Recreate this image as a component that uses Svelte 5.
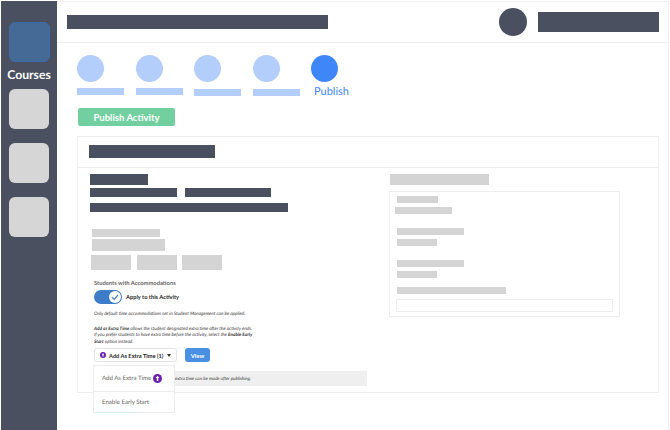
<script lang="ts">
	const steps = [
		{ low: false },
		{ low: false },
		{ low: true },
		{ low: true }
	];
</script>

<div class="page">
	<nav class="side">
		<div class="tile active"></div>
		<div class="courses">Courses</div>
		<div class="tile"></div>
		<div class="tile"></div>
		<div class="tile"></div>
	</nav>

	<div class="main">
		<header class="top">
			<div class="dark top-title"></div>
			<div class="avatar"></div>
			<div class="dark top-user"></div>
		</header>

		<section class="content">
			<div class="stepper">
				{#each steps as step}
					<div class="step">
						<div class="dot"></div>
						<div class="step-label" class:low={step.low}></div>
					</div>
				{/each}
				<div class="step">
					<div class="dot current"></div>
					<div class="publish">Publish</div>
				</div>
			</div>

			<button class="publish-btn">Publish Activity</button>

			<div class="card">
				<div class="card-head">
					<div class="dark card-title"></div>
				</div>
				<div class="card-body">
					<div class="left">
						<div class="dark l1"></div>
						<div class="row l2">
							<div class="dark l2a"></div>
							<div class="dark l2b"></div>
						</div>
						<div class="dark l3"></div>
						<div class="grey g1"></div>
						<div class="grey g2"></div>
						<div class="row g3">
							<div class="grey chip"></div>
							<div class="grey chip"></div>
							<div class="grey chip"></div>
						</div>

						<div class="acc">
							<div class="acc-title">Students with Accommodations</div>
							<div class="apply">
								<div class="toggle">
									<div class="knob">
										<svg viewBox="0 0 12 12" width="10" height="10">
											<path d="M2.5 6.3 5 8.8 9.6 3.6" fill="none" stroke="#3d7cc9" stroke-width="1.4" />
										</svg>
									</div>
								</div>
								<span>Apply to this Activity</span>
							</div>
							<p class="fine first">Only default time accommodations set in Student Management can be applied.</p>
							<p class="fine second">
								<b>Add as Extra Time</b> allows the student designated extra time after the activity ends.<br />
								If you prefer students to have extra time before the activity, select the <b>Enable Early<br />
								Start</b> option instead.
							</p>
							<div class="actions">
								<div class="dropdown">
									<button class="drop-btn">
										<svg class="up small" viewBox="0 0 12 12">
											<circle cx="6" cy="6" r="6" fill="#6a1fb0" />
											<path d="M6 2.4 8.6 5.4H7V9.4H5V5.4H3.4Z" fill="#fff" />
										</svg>
										<span class="drop-text">Add As Extra Time (1)</span>
										<span class="caret"></span>
									</button>
									<div class="menu">
										<div class="menu-item one">
											Add As Extra Time
											<svg class="up" viewBox="0 0 12 12">
												<circle cx="6" cy="6" r="6" fill="#6a1fb0" />
												<path d="M6 2.4 8.6 5.4H7V9.4H5V5.4H3.4Z" fill="#fff" />
											</svg>
										</div>
										<div class="menu-item two">Enable Early Start</div>
									</div>
								</div>
								<button class="view">View</button>
							</div>
							<div class="note">extra time can be made after publishing.</div>
						</div>
					</div>

					<div class="right">
						<div class="grey r-title"></div>
						<div class="panel">
							<div class="grey p1"></div>
							<div class="grey p2"></div>
							<div class="grey p3"></div>
							<div class="grey p4"></div>
							<div class="grey p3"></div>
							<div class="grey p4"></div>
							<div class="grey p5"></div>
							<div class="field"></div>
						</div>
					</div>
				</div>
			</div>
		</section>
	</div>
</div>

<style>
	:global(body) {
		background: #fff;
	}
	.page {
		width: 670px;
		height: 430px;
		box-sizing: border-box;
		padding: 1px 0 0 1px;
		display: flex;
		overflow: hidden;
		font-family: Lato, "Open Sans", sans-serif;
		text-rendering: geometricPrecision;
	}
	.side {
		width: 56px;
		flex: none;
		background: #4a5060;
		display: flex;
		flex-direction: column;
		align-items: center;
		padding-top: 21px;
		box-sizing: border-box;
	}
	.tile {
		width: 40px;
		height: 40px;
		border-radius: 6px;
		background: #d6d6d6;
		margin-bottom: 14px;
	}
	.tile.active {
		width: 41px;
		background: #466a96;
		border: 1px solid #3f6ca8;
		box-sizing: border-box;
		margin-bottom: 0;
	}
	.courses {
		color: #fff;
		font-size: 12.2px;
		font-weight: 700;
		line-height: 16px;
		margin: 5px 0 6px;
	}
	.main {
		flex: 1;
		border-top: 1px solid #f2f2f2;
		border-right: 1px solid #f0f0f0;
		margin-right: 1px;
	}
	.top {
		height: 40px;
		border-bottom: 1px solid #f0f0f0;
		display: flex;
		align-items: center;
	}
	.dark {
		background: #4a5060;
	}
	.grey {
		background: #d4d4d4;
	}
	.top-title {
		width: 261px;
		height: 14px;
		margin-left: 10px;
	}
	.avatar {
		width: 28px;
		height: 28px;
		border-radius: 50%;
		background: #4a5060;
		margin-left: 171px;
	}
	.top-user {
		width: 121px;
		height: 20px;
		margin-left: 11px;
	}
	.content {
		padding: 12px 0 0 20px;
	}
	.stepper {
		display: grid;
		grid-template-columns: repeat(5, 58.5px);
		height: 44px;
	}
	.dot {
		width: 27px;
		height: 27px;
		border-radius: 50%;
		background: #b3cefb;
	}
	.dot.current {
		background: #3f87f9;
	}
	.step-label {
		width: 47px;
		height: 7px;
		margin-top: 6px;
		background: #b3cefb;
	}
	.step-label.low {
		margin-top: 7px;
	}
	.publish {
		color: #3f87f9;
		font-size: 11px;
		line-height: 16px;
		margin: 2px 0 0 3px;
	}
	.publish-btn {
		display: block;
		width: 97px;
		height: 18px;
		margin: 9px 0 0 1px;
		padding: 0;
		border: none;
		border-radius: 2px;
		background: #72d0a0;
		color: #fff;
		font: 700 9.5px Lato, sans-serif;
	}
	.card {
		width: 582px;
		height: 257px;
		box-sizing: border-box;
		margin-top: 10px;
		border: 1px solid #eeeeee;
	}
	.card-head {
		height: 22px;
		border-bottom: 1px solid #eeeeee;
		padding: 8px 0 0 11px;
	}
	.card-title {
		width: 126px;
		height: 13px;
	}
	.card-body {
		display: grid;
		grid-template-columns: 312px 1fr;
	}
	.left {
		padding: 6px 0 0 12px;
	}
	.row {
		display: flex;
	}
	.l1 {
		width: 58px;
		height: 11px;
	}
	.l2 {
		gap: 8px;
		margin-top: 3px;
	}
	.l2a {
		width: 87px;
		height: 9px;
	}
	.l2b {
		width: 86px;
		height: 9px;
	}
	.l3 {
		width: 198px;
		height: 9px;
		margin-top: 6px;
	}
	.g1 {
		width: 68px;
		height: 8px;
		margin: 17px 0 0 2px;
	}
	.g2 {
		width: 73px;
		height: 12px;
		margin: 2px 0 0 2px;
	}
	.g3 {
		gap: 5.5px;
		margin: 4px 0 0 1px;
	}
	.chip {
		width: 40px;
		height: 15px;
	}
	.acc {
		padding: 9px 0 0 4px;
		color: #333;
	}
	.acc-title {
		font-size: 5.8px;
		font-weight: 700;
		line-height: 9px;
		color: #666;
	}
	.apply {
		display: flex;
		align-items: center;
		gap: 4px;
		margin-top: 2px;
		font-size: 5.7px;
		font-weight: 700;
		color: #222;
	}
	.toggle {
		width: 28px;
		height: 14px;
		border-radius: 7px;
		background: #3d7cc9;
		position: relative;
	}
	.knob {
		position: absolute;
		top: 1px;
		right: 1px;
		width: 12px;
		height: 12px;
		border-radius: 50%;
		background: #fff;
		display: flex;
		align-items: center;
		justify-content: center;
	}
	.fine {
		margin: 0;
		font-size: 4.65px;
		font-style: italic;
		line-height: 6.6px;
		color: #333;
	}
	.fine.first {
		margin-top: 6px;
	}
	.fine.second {
		margin-top: 8px;
	}
	.actions {
		display: flex;
		gap: 8px;
		margin-top: 4px;
	}
	.dropdown {
		position: relative;
	}
	.drop-btn {
		width: 83px;
		height: 14px;
		box-sizing: border-box;
		border: 1px solid #e4e4e4;
		border-radius: 3px;
		background: #fff;
		padding: 0 0 0 5px;
		display: flex;
		align-items: center;
		font: 700 5.7px Lato, sans-serif;
		color: #222;
		white-space: nowrap;
	}
	.drop-text {
		margin-left: 3px;
	}
	.up {
		width: 9px;
		height: 9px;
		flex: none;
	}
	.up.small {
		width: 6px;
		height: 6px;
	}
	.caret {
		width: 0;
		height: 0;
		margin-left: 4px;
		border: 2.5px solid transparent;
		border-top: 3px solid #333;
		border-bottom: none;
	}
	.view {
		width: 25px;
		height: 14px;
		padding: 0;
		border: none;
		border-radius: 3px;
		background: #4a90e2;
		color: #fff;
		font: 700 6px Lato, sans-serif;
	}
	.menu {
		position: absolute;
		top: 17px;
		left: -1px;
		width: 82px;
		height: 48px;
		box-sizing: border-box;
		background: #fff;
		border: 1px solid #ececec;
		color: #666;
		font-size: 6.1px;
		z-index: 2;
	}
	.menu::after {
		content: "";
		position: absolute;
		left: 0;
		bottom: -1px;
		width: 44px;
		height: 1px;
		background: #d5efe2;
	}
	.menu-item {
		display: flex;
		align-items: center;
		gap: 2px;
		white-space: nowrap;
	}
	.menu-item.one {
		height: 25px;
		padding-left: 8px;
		border-bottom: 1px solid #ececec;
	}
	.menu-item.two {
		height: 21px;
		padding-left: 8px;
	}
	.note {
		width: 194px;
		height: 15px;
		margin-top: 9px;
		margin-left: 79px;
		background: #efefef;
		font-size: 4.6px;
		font-style: italic;
		line-height: 15px;
		color: #333;
		text-indent: 2px;
		white-space: nowrap;
	}
	.right {
		padding-top: 6px;
	}
	.r-title {
		width: 99px;
		height: 11px;
	}
	.panel {
		width: 231px;
		height: 126px;
		box-sizing: border-box;
		margin: 6px 0 0 -1px;
		border: 1px solid #eeeeee;
		padding: 4px 0 0 7px;
	}
	.p1 {
		width: 41px;
		height: 7px;
	}
	.p2 {
		width: 57px;
		height: 7px;
		margin: 4px 0 0 -2px;
	}
	.p3 {
		width: 67px;
		height: 7px;
		margin-top: 14px;
	}
	.p4 {
		width: 40px;
		height: 7px;
		margin-top: 4px;
	}
	.p5 {
		width: 109px;
		height: 7px;
		margin-top: 9px;
	}
	.field {
		width: 217px;
		height: 13px;
		box-sizing: border-box;
		margin: 5px 0 0 -1px;
		border: 1px solid #eeeeee;
	}
</style>
